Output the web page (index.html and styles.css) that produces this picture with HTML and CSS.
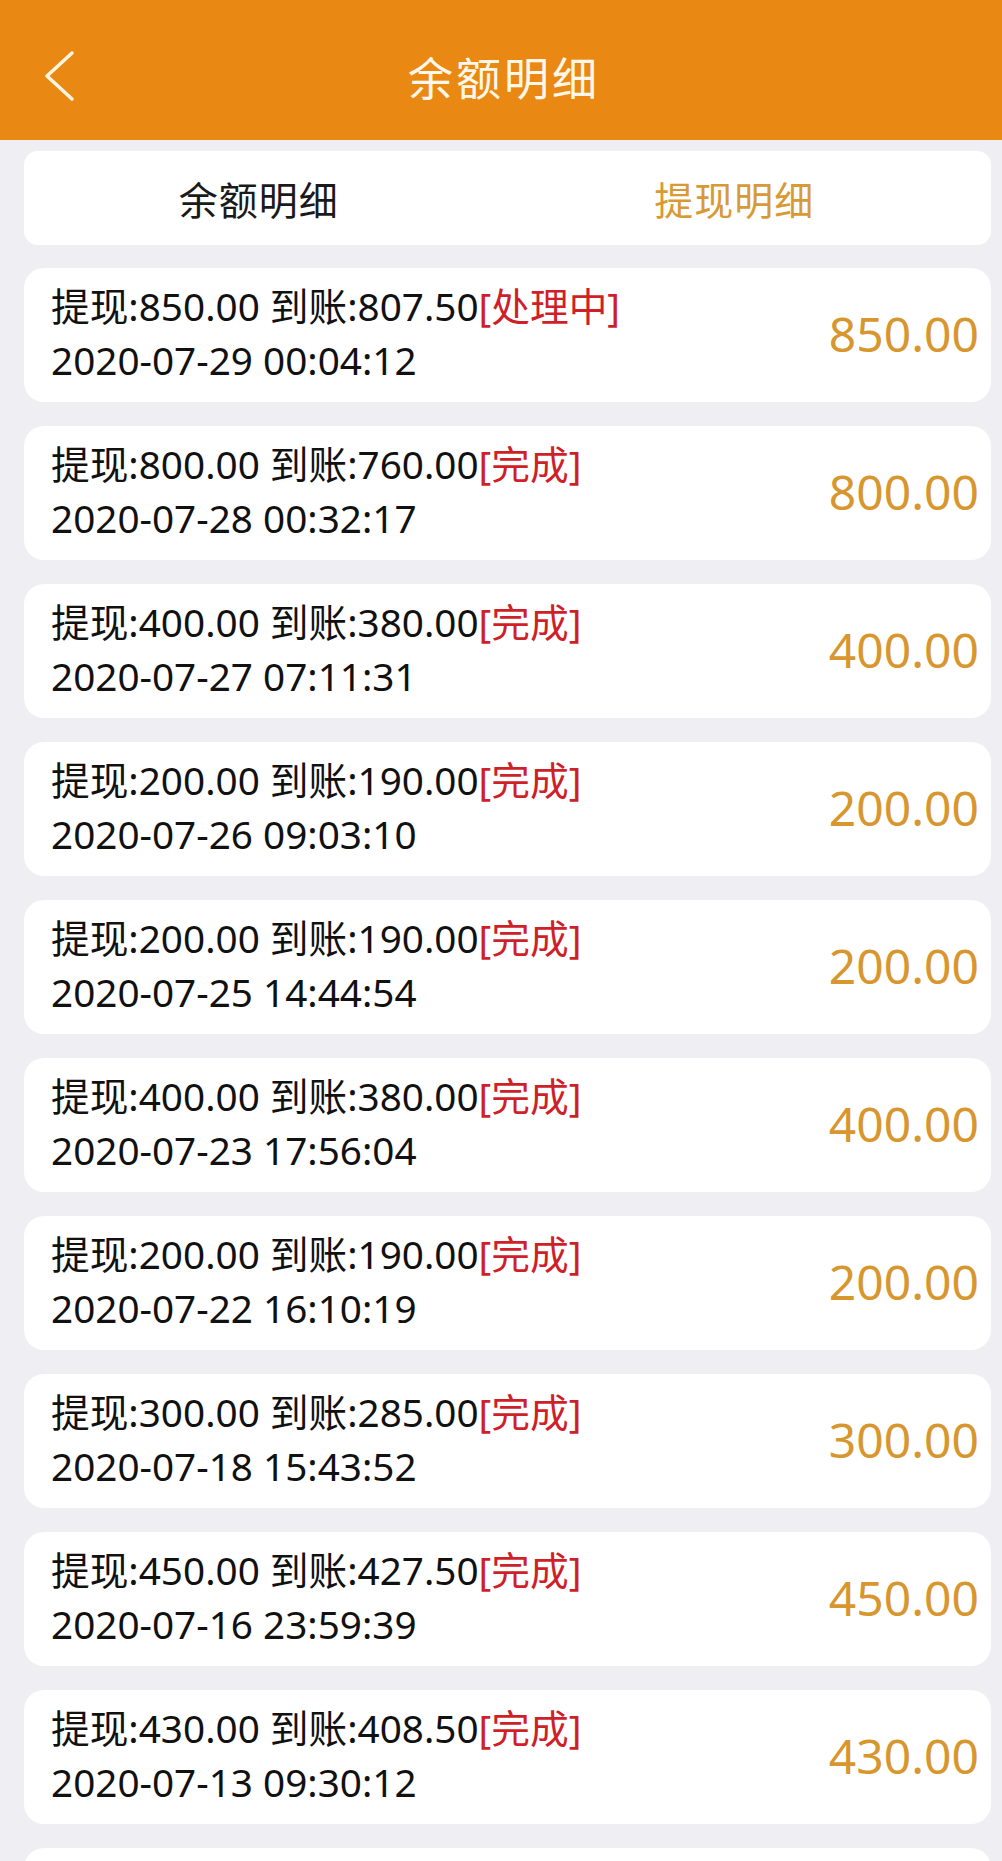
FILE: index.html
```html
<!DOCTYPE html>
<html lang="zh-CN">
<head>
    <meta charset="UTF-8">
    <meta name="viewport" content="width=device-width, initial-scale=1.0">
    <title>余额明细</title>
    <link rel="stylesheet" href="styles.css">
</head>
<body>
    <header class="topbar">
        <div class="back">
            <svg width="34" height="52" viewBox="0 0 34 52">
                <path d="M29 3 L4 26 L29 49" fill="none" stroke="#fff6e2" stroke-width="3.5" stroke-linecap="round" stroke-linejoin="round"/>
            </svg>
        </div>
        <h1 class="title">余额明细</h1>
        <div></div>
    </header>

    <div class="tabs">
        <div class="tab">余额明细</div>
        <div class="tab active">提现明细</div>
    </div>

    <div class="list">
        <div class="item">
            <div class="info">
                <div class="line">提现:850.00 到账:807.50<span class="status">[处理中]</span></div>
                <div class="line">2020-07-29 00:04:12</div>
            </div>
            <div class="amount">850.00</div>
        </div>
        <div class="item">
            <div class="info">
                <div class="line">提现:800.00 到账:760.00<span class="status">[完成]</span></div>
                <div class="line">2020-07-28 00:32:17</div>
            </div>
            <div class="amount">800.00</div>
        </div>
        <div class="item">
            <div class="info">
                <div class="line">提现:400.00 到账:380.00<span class="status">[完成]</span></div>
                <div class="line">2020-07-27 07:11:31</div>
            </div>
            <div class="amount">400.00</div>
        </div>
        <div class="item">
            <div class="info">
                <div class="line">提现:200.00 到账:190.00<span class="status">[完成]</span></div>
                <div class="line">2020-07-26 09:03:10</div>
            </div>
            <div class="amount">200.00</div>
        </div>
        <div class="item">
            <div class="info">
                <div class="line">提现:200.00 到账:190.00<span class="status">[完成]</span></div>
                <div class="line">2020-07-25 14:44:54</div>
            </div>
            <div class="amount">200.00</div>
        </div>
        <div class="item">
            <div class="info">
                <div class="line">提现:400.00 到账:380.00<span class="status">[完成]</span></div>
                <div class="line">2020-07-23 17:56:04</div>
            </div>
            <div class="amount">400.00</div>
        </div>
        <div class="item">
            <div class="info">
                <div class="line">提现:200.00 到账:190.00<span class="status">[完成]</span></div>
                <div class="line">2020-07-22 16:10:19</div>
            </div>
            <div class="amount">200.00</div>
        </div>
        <div class="item">
            <div class="info">
                <div class="line">提现:300.00 到账:285.00<span class="status">[完成]</span></div>
                <div class="line">2020-07-18 15:43:52</div>
            </div>
            <div class="amount">300.00</div>
        </div>
        <div class="item">
            <div class="info">
                <div class="line">提现:450.00 到账:427.50<span class="status">[完成]</span></div>
                <div class="line">2020-07-16 23:59:39</div>
            </div>
            <div class="amount">450.00</div>
        </div>
        <div class="item">
            <div class="info">
                <div class="line">提现:430.00 到账:408.50<span class="status">[完成]</span></div>
                <div class="line">2020-07-13 09:30:12</div>
            </div>
            <div class="amount">430.00</div>
        </div>
        <!-- next row, only its top edge is on screen -->
        <div class="item"></div>
    </div>
</body>
</html>
```

FILE: styles.css
```css
body, html {
    margin: 0;
    padding: 0;
    font-family: 'Noto Sans', 'Noto Sans CJK SC', sans-serif;
    background: #eeeef3;
    color: #111;
}

.topbar {
    display: grid;
    grid-template-columns: 1fr auto 1fr;
    align-items: center;
    height: 128px;
    padding-top: 12px;
    background: #e98914;
}

.back {
    display: flex;
    align-items: center;
    padding-left: 43px;
}

.back svg {
    display: block;
}

.title {
    margin: 0;
    font-size: 45px;
    font-weight: normal;
    color: #fff8ea;
    letter-spacing: 3px;
    padding-left: 6px;
}

.tabs {
    display: flex;
    height: 94px;
    margin: 11px 11px 0 24px;
    background: #fff;
    border-radius: 14px;
}

.tab {
    flex: 1;
    display: flex;
    align-items: center;
    justify-content: center;
    font-size: 39px;
    letter-spacing: 1px;
    color: #1a1a1a;
}

.tab:first-child {
    padding-right: 6px;
}

.tab.active {
    color: #d89a35;
    padding-right: 22px;
}

.list {
    display: flex;
    flex-direction: column;
    gap: 24px;
    margin: 23px 11px 0 24px;
}

.item {
    display: flex;
    align-items: center;
    justify-content: space-between;
    flex-shrink: 0;
    height: 134px;
    padding: 0 12px 4px 27px;
    box-sizing: border-box;
    background: #fff;
    border-radius: 20px;
}

.line {
    font-size: 38.7px;
    line-height: 54px;
    white-space: nowrap;
    color: #111;
}

.status {
    color: #cf1f28;
}

.amount {
    font-size: 48px;
    color: #d8962e;
}
```
